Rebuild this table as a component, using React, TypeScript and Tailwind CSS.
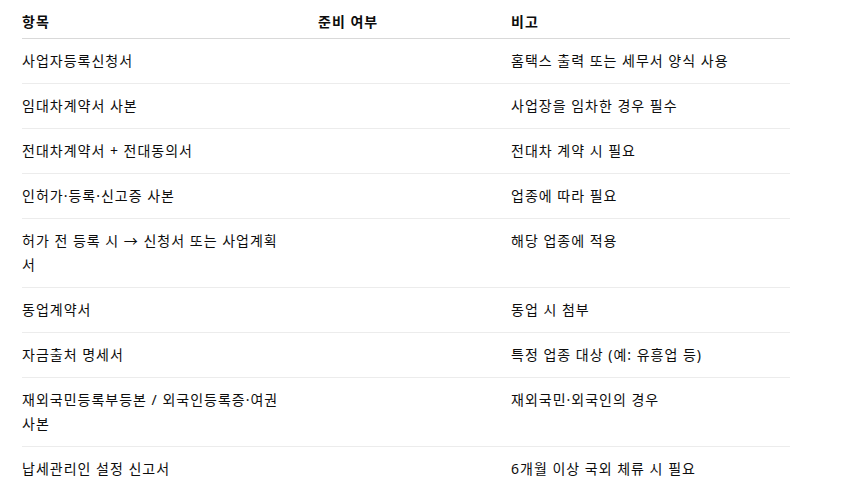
const rows: { item: string; note: string }[] = [
  { item: '사업자등록신청서', note: '홈택스 출력 또는 세무서 양식 사용' },
  { item: '임대차계약서 사본', note: '사업장을 임차한 경우 필수' },
  { item: '전대차계약서 + 전대동의서', note: '전대차 계약 시 필요' },
  { item: '인허가·등록·신고증 사본', note: '업종에 따라 필요' },
  { item: '허가 전 등록 시 → 신청서 또는 사업계획서', note: '해당 업종에 적용' },
  { item: '동업계약서', note: '동업 시 첨부' },
  { item: '자금출처 명세서', note: '특정 업종 대상 (예: 유흥업 등)' },
  { item: '재외국민등록부등본 / 외국인등록증·여권 사본', note: '재외국민·외국인의 경우' },
  { item: '납세관리인 설정 신고서', note: '6개월 이상 국외 체류 시 필요' },
];

export default function App() {
  return (
    <div
      className="min-h-[500px] w-[844px] bg-white pl-[22px] text-[14px] leading-[24px] tracking-[1px] text-[#0d0d0d]"
      style={{ fontFamily: '"Noto Sans", "Noto Sans CJK KR", sans-serif' }}
    >
      <table className="w-[768px] table-fixed border-collapse text-left">
        <colgroup>
          <col className="w-[280px]" />
          <col className="w-[193px]" />
          <col className="w-[295px]" />
        </colgroup>
        <thead>
          <tr className="border-b border-[#d9d9d9]">
            <th className="pb-1 pl-0 pr-4 pt-2.5 font-bold">항목</th>
            <th className="px-4 pb-1 pt-2.5 font-bold">준비 여부</th>
            <th className="px-4 pb-1 pt-2.5 font-bold">비고</th>
          </tr>
        </thead>
        <tbody>
          {rows.map((row, i) => (
            <tr
              key={row.item}
              className={i < rows.length - 1 ? 'border-b border-[#ececec]' : ''}
            >
              <td className="py-2.5 pl-0 pr-4 align-top">{row.item}</td>
              <td className="px-4 py-2.5 align-top"></td>
              <td className="px-4 py-2.5 align-top">{row.note}</td>
            </tr>
          ))}
        </tbody>
      </table>
    </div>
  );
}
